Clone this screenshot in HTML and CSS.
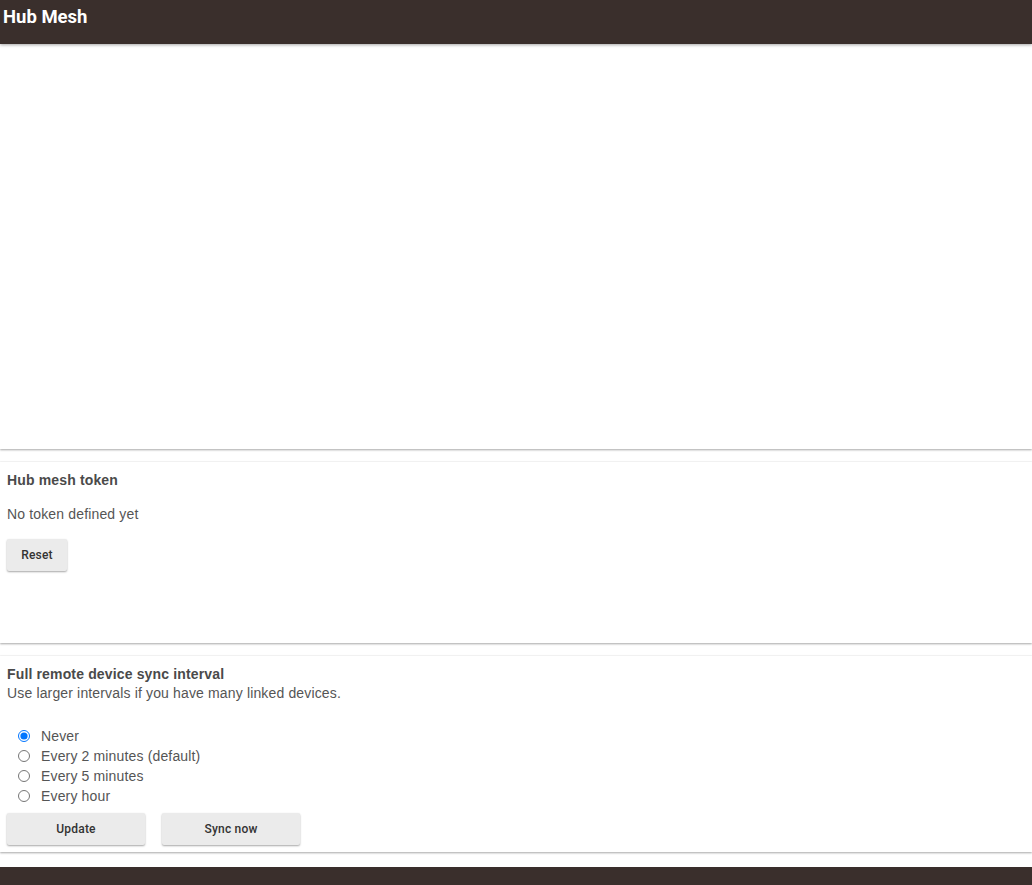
FILE: index.html
```html
<!DOCTYPE html>
<html>
<head>
<meta charset="utf-8">
<title>Hub Mesh</title>
<link rel="stylesheet" href="styles.css">
</head>
<body>
<header class="topbar"><h1 class="topbar-title">Hub Mesh</h1></header>
<main class="content">
  <section class="card card-empty"></section>
  <section class="card card-token">
    <h2 class="card-title">Hub mesh token</h2>
    <p class="card-text">No token defined yet</p>
    <div class="actions"><button class="btn btn-reset">Reset</button></div>
  </section>
  <section class="card card-sync">
    <h2 class="card-title">Full remote device sync interval</h2>
    <p class="card-sub">Use larger intervals if you have many linked devices.</p>
    <div class="radios">
      <label class="radio-row"><input type="radio" name="interval" checked><span>Never</span></label>
      <label class="radio-row"><input type="radio" name="interval"><span>Every 2 minutes (default)</span></label>
      <label class="radio-row"><input type="radio" name="interval"><span>Every 5 minutes</span></label>
      <label class="radio-row"><input type="radio" name="interval"><span>Every hour</span></label>
    </div>
    <div class="actions actions-sync">
      <button class="btn btn-wide">Update</button>
      <button class="btn btn-wide">Sync now</button>
    </div>
  </section>
</main>
<footer class="footer"></footer>
</body>
</html>
```

FILE: styles.css
```css
html, body {
  margin: 0;
  padding: 0;
  background: #fff;
}
body {
  font-family: "Liberation Sans", Arial, sans-serif;
  color: #555;
  font-size: 14px;
  letter-spacing: 0.15px;
}
.topbar {
  background: #3a2f2c;
  height: 44px;
  box-shadow: 0 1px 3px rgba(0,0,0,0.35);
  position: relative;
  z-index: 2;
}
.topbar-title {
  margin: 0;
  padding: 6px 0 0 3px;
  font-family: Roboto, sans-serif;
  font-weight: 700;
  font-size: 18.5px;
  line-height: 22px;
  letter-spacing: 0;
  color: #fff;
}
.content {
  display: flex;
  flex-direction: column;
  gap: 13px;
}
.card {
  background: #fff;
  box-shadow: 0 1px 2px rgba(0,0,0,0.35), 0 -1px 1px rgba(0,0,0,0.03);
  padding: 8px 7px 7px;
}
.card-empty {
  height: 405px;
  padding: 0;
  box-sizing: border-box;
}
.card-title {
  margin: 0;
  font-size: 14px;
  font-weight: 700;
  line-height: 20px;
  color: #4a4a4a;
}
.card-text {
  margin: 14px 0 0;
  line-height: 20px;
}
.card-sub {
  margin: 0;
  line-height: 19px;
}
.card-token {
  height: 181px;
  box-sizing: border-box;
}
.actions {
  display: flex;
  gap: 17px;
  margin-top: 15px;
}
.actions-sync {
  margin-top: 7px;
}
.btn {
  font-family: Roboto, sans-serif;
  font-weight: 500;
  font-size: 12px;
  letter-spacing: 0.2px;
  color: #333;
  background: #ebebeb;
  border: none;
  border-radius: 2px;
  height: 32px;
  padding: 0 14px;
  box-shadow: 0 1px 2px rgba(0,0,0,0.35);
  cursor: pointer;
}
.btn-reset {
  width: 60px;
  padding: 0;
}
.btn-wide {
  width: 138px;
}
.radios {
  margin-top: 23px;
  display: flex;
  flex-direction: column;
}
.radio-row {
  display: flex;
  align-items: center;
  height: 20px;
}
.radio-row input {
  margin: 0 11px 0 11px;
  width: 12px;
  height: 12px;
}
.footer {
  margin-top: 15px;
  height: 18px;
  background: #3a2f2c;
}
```
